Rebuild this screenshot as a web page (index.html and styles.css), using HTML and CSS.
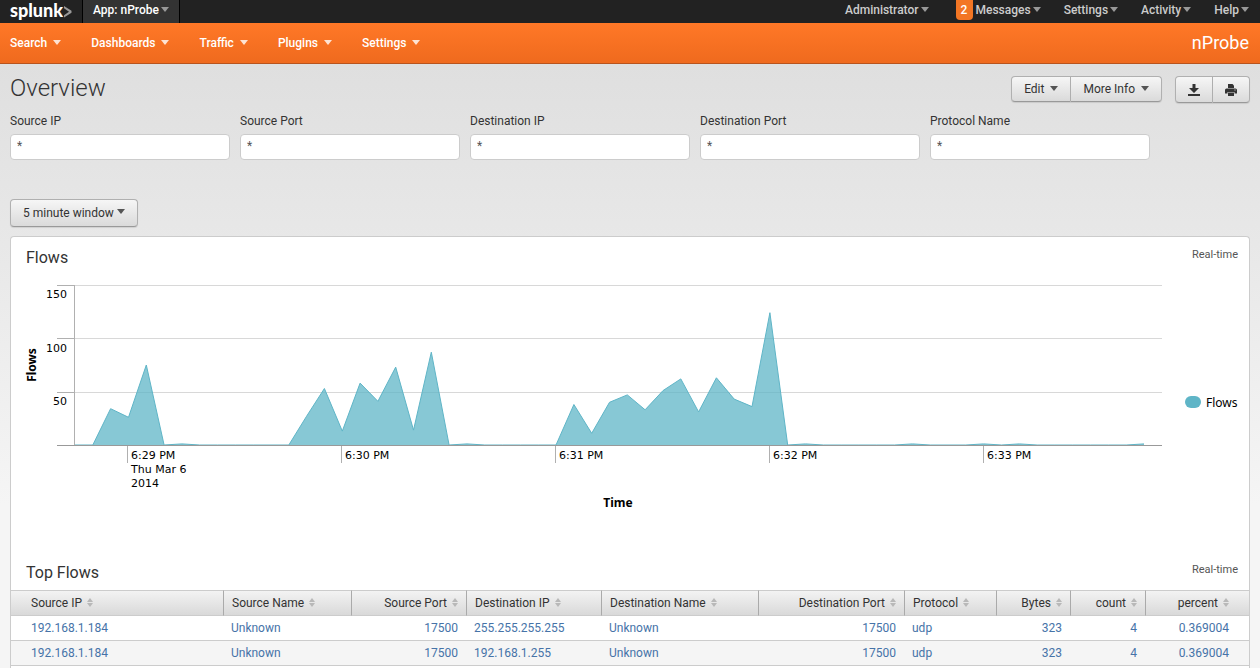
FILE: index.html
```
<!DOCTYPE html>
<html lang="en">
<head>
    <meta charset="utf-8">
    <title>Overview - nProbe</title>
    <link rel="stylesheet" href="styles.css">
</head>
<body>
    <div class="topbar">
        <a class="logo" href="#">splunk<svg width="9" height="14" viewBox="0 0 9 14"><path d="M1 1 L1 3.2 L6 6.8 L1 10.2 L1 12.6 L8.5 7.8 V5.8z" fill="#999"/></svg></a>
        <a class="app" href="#">App: nProbe<span class="caret"></span></a>
        <div class="account">
            <a href="#">Administrator<span class="caret"></span></a>
            <a href="#"><span class="badge">2</span>Messages<span class="caret"></span></a>
            <a href="#">Settings<span class="caret"></span></a>
            <a href="#">Activity<span class="caret"></span></a>
            <a href="#">Help<span class="caret"></span></a>
        </div>
    </div>
    <nav class="appbar">
        <a href="#">Search<span class="caret"></span></a>
        <a href="#">Dashboards<span class="caret"></span></a>
        <a href="#">Traffic<span class="caret"></span></a>
        <a href="#">Plugins<span class="caret"></span></a>
        <a href="#">Settings<span class="caret"></span></a>
        <a class="appname" href="#">nProbe</a>
    </nav>

    <main>
        <div class="header">
            <h1>Overview</h1>
            <div class="group">
                <button class="btn">Edit<span class="caret"></span></button>
                <button class="btn">More Info<span class="caret"></span></button>
            </div>
            <div class="group icons">
                <button class="btn" aria-label="Export">
                    <svg width="12" height="12" viewBox="0 0 12 12" fill="#333"><path d="M4.5 0h3v4H11L6 9 1 4h3.5zM0 10h12v2H0z"/></svg>
                </button>
                <button class="btn" aria-label="Print">
                    <svg width="12" height="12" viewBox="0 0 12 12" fill="#333"><path d="M3 0h4.5L9 1.5V4H3z"/><path fill-rule="evenodd" d="M1.5 4.5h9Q12 4.5 12 6v3.5H9.5V8h-7v1.5H0V6q0-1.5 1.5-1.5zM9.5 5.5v1h1v-1z"/><path d="M3 8.5h6V12H3z"/></svg>
                </button>
            </div>
        </div>

        <form class="filters">
            <div class="field">
                <label for="srcip">Source IP</label>
                <input type="text" id="srcip" value="*">
            </div>
            <div class="field">
                <label for="srcport">Source Port</label>
                <input type="text" id="srcport" value="*">
            </div>
            <div class="field">
                <label for="dstip">Destination IP</label>
                <input type="text" id="dstip" value="*">
            </div>
            <div class="field">
                <label for="dstport">Destination Port</label>
                <input type="text" id="dstport" value="*">
            </div>
            <div class="field">
                <label for="proto">Protocol Name</label>
                <input type="text" id="proto" value="*">
            </div>
        </form>

        <button class="btn window">5 minute window<span class="caret"></span></button>

        <div class="panel">
            <div class="panel_head">
                <h2>Flows</h2>
                <span>Real-time</span>
            </div>
            <svg class="chart" viewBox="0 0 1238 277">
                <g class="grid">
                    <path d="M64 10.5H1151M64 63.5H1151M64 117.5H1151"/>
                </g>
                <polygon id="area"/>
                <polyline id="line"/>
                <g class="axis">
                    <path d="M46 10.5H64M46 63.5H64M46 117.5H64M63.5 10V170"/>
                    <path d="M116.5 171V188M330.5 171V188M544.5 171V188M758.5 171V188M972.5 171V188"/>
                    <path class="base" d="M46 170.5H1151"/>
                </g>
                <g class="ticks ylabels">
                    <text x="56" y="23">150</text>
                    <text x="56" y="77">100</text>
                    <text x="56" y="130">50</text>
                </g>
                <g class="ticks">
                    <text x="120" y="184">6:29 PM</text>
                    <text x="120" y="198">Thu Mar 6</text>
                    <text x="120" y="212">2014</text>
                    <text x="334" y="184">6:30 PM</text>
                    <text x="548" y="184">6:31 PM</text>
                    <text x="762" y="184">6:32 PM</text>
                    <text x="976" y="184">6:33 PM</text>
                </g>
                <text class="title" x="607" y="232">Time</text>
                <text class="title" transform="translate(25 90) rotate(-90)">Flows</text>
                <rect class="key" x="1174" y="121" width="16" height="12" rx="6"/>
                <text x="1195" y="132">Flows</text>
            </svg>

            <div class="panel_head">
                <h2>Top Flows</h2>
                <span>Real-time</span>
            </div>
            <table>
                <colgroup>
                    <col class="c1"><col class="c2"><col class="c3"><col class="c4"><col class="c5">
                    <col class="c6"><col class="c7"><col class="c8"><col class="c9"><col class="c10">
                </colgroup>
                <thead>
                    <tr>
                        <th>Source IP<span class="sort"></span></th>
                        <th>Source Name<span class="sort"></span></th>
                        <th class="num">Source Port<span class="sort"></span></th>
                        <th>Destination IP<span class="sort"></span></th>
                        <th>Destination Name<span class="sort"></span></th>
                        <th class="num">Destination Port<span class="sort"></span></th>
                        <th>Protocol<span class="sort"></span></th>
                        <th class="num">Bytes<span class="sort"></span></th>
                        <th class="num">count<span class="sort"></span></th>
                        <th class="num">percent<span class="sort"></span></th>
                    </tr>
                </thead>
                <tbody>
                    <tr>
                        <td>192.168.1.184</td>
                        <td>Unknown</td>
                        <td class="num">17500</td>
                        <td>255.255.255.255</td>
                        <td>Unknown</td>
                        <td class="num">17500</td>
                        <td>udp</td>
                        <td class="num">323</td>
                        <td class="num">4</td>
                        <td class="num">0.369004</td>
                    </tr>
                    <tr>
                        <td>192.168.1.184</td>
                        <td>Unknown</td>
                        <td class="num">17500</td>
                        <td>192.168.1.255</td>
                        <td>Unknown</td>
                        <td class="num">17500</td>
                        <td>udp</td>
                        <td class="num">323</td>
                        <td class="num">4</td>
                        <td class="num">0.369004</td>
                    </tr>
                </tbody>
            </table>
        </div>
    </main>

    <script>
// one value every 5 seconds
const flows = [
    0, 0, 34, 26, 75, 0, 1, 0, 0, 0, 0, 0,
    0, 27, 53, 13, 58, 41, 73, 14, 87, 0, 1, 0,
    0, 0, 0, 0, 38, 11, 40, 47, 33, 51, 62, 31,
    63, 43, 36, 124, 0, 1, 0, 0, 0, 0, 0, 1,
    0, 0, 0, 1, 0, 1, 0, 0, 0, 0, 0, 0, 1
];
const left = 64, base = 170, width = 1069, scale = 160 / 150;

const points = flows.map((v, i) => {
    const x = left + i * width / (flows.length - 1);
    return x.toFixed(1) + "," + (base - v * scale).toFixed(1);
}).join(" ");

document.getElementById("line").setAttribute("points", points);
document.getElementById("area").setAttribute("points", `${left},${base} ${points} ${left + width},${base}`);
    </script>
</body>
</html>
```
FILE: styles.css
```
*{
    box-sizing: border-box;
}
body{
    margin: 0;
    min-height: 100vh;
    display: flex;
    flex-direction: column;
    font-family: Roboto, sans-serif;
    font-size: 12px;
    line-height: 16px;
    color: #333;
    background: #f5f5f5 linear-gradient(#dfdfdf, #f5f5f5) no-repeat 0 64px / 100% 440px;
}
a{
    text-decoration: none;
}
h1, h2{
    margin: 0;
}
.caret{
    display: inline-block;
    border-left: 4px solid transparent;
    border-right: 4px solid transparent;
    border-top: 5px solid currentColor;
    vertical-align: middle;
}

/* top bars */
.topbar{
    display: flex;
    height: 23px;
    background: #222;
    font-weight: 500;
    line-height: 20px;
}
.logo{
    width: 83px;
    padding-left: 10px;
    color: #fff;
    font-family: Lato, sans-serif;
    font-size: 18px;
    font-weight: 900;
    white-space: nowrap;
    border-right: 1px solid #000;
}
.logo svg{
    vertical-align: -2px;
}
.app{
    padding: 0 10px;
    color: #fff;
    background: #333;
    border-right: 1px solid #000;
}
.account{
    display: flex;
    gap: 23px;
    margin-left: auto;
    padding-right: 11px;
}
.account a{
    color: #ccc;
}
.topbar .caret{
    color: #999;
    margin-left: 2px;
    margin-bottom: 2px;
}
.badge{
    display: inline-block;
    width: 17px;
    margin-right: 3px;
    margin-left: 4px;
    text-align: center;
    color: #fff;
    background: #f37624;
    border-radius: 0 0 4px 4px;
}
.appbar{
    display: flex;
    align-items: center;
    gap: 30px;
    height: 41px;
    padding: 0 11px 0 10px;
    font-weight: 500;
    background: linear-gradient(#ff7827, #ef6a1e);
    border-bottom: 1px solid #b8541d;
}
.appbar a{
    color: #fff;
}
.appbar .caret{
    margin-left: 6px;
    margin-bottom: 2px;
    opacity: 0.8;
}
.appbar .appname{
    margin-left: auto;
    font-size: 18px;
    font-weight: 400;
}

main{
    flex: 1;
    display: flex;
    flex-direction: column;
    padding: 12px 10px 0;
}
.header{
    display: flex;
    align-items: flex-start;
    margin-bottom: 10px;
}
h1{
    flex: 1;
    font-size: 24px;
    line-height: 24px;
    font-weight: 300;
}

/* buttons */
.btn{
    height: 26px;
    padding: 0 12px;
    font: inherit;
    color: #333;
    background: linear-gradient(#f6f6f6, #dadada);
    border: 1px solid #b0b0b0;
    border-bottom-color: #999;
    border-radius: 4px;
    box-shadow: 0 1px 1px rgba(0, 0, 0, 0.1);
    white-space: nowrap;
}
.btn .caret{
    margin-left: 6px;
    margin-bottom: 2px;
    color: #555;
}
.group{
    display: flex;
}
.group .btn:first-child{
    border-radius: 4px 0 0 4px;
}
.group .btn:last-child{
    border-radius: 0 4px 4px 0;
    border-left: 0;
}
.icons{
    margin-left: 13px;
}
.icons .btn{
    display: flex;
    align-items: center;
    height: 27px;
}
.window{
    align-self: flex-start;
    height: 28px;
    margin-bottom: 9px;
}
.window .caret{
    margin-left: 3px;
    margin-bottom: 4px;
}

.filters{
    display: flex;
    flex-wrap: wrap;
    gap: 10px;
    margin-bottom: 39px;
}
.field{
    width: 220px;
}
.field label{
    display: block;
    margin-bottom: 5px;
}
.field input{
    display: block;
    width: 100%;
    height: 26px;
    padding: 0 6px 2px;
    font: inherit;
    color: #555;
    background: #fff;
    border: 1px solid #ccc;
    border-radius: 4px;
}

/* panel */
.panel{
    flex: 1;
    background: #fff;
    border: 1px solid #ccc;
    border-bottom: 0;
    border-radius: 4px 4px 0 0;
}
.panel_head{
    display: flex;
    justify-content: space-between;
    height: 38px;
    padding: 9px 11px 0 15px;
    font-size: 11px;
    line-height: 18px;
    color: #555;
}
h2{
    font-size: 16px;
    line-height: 24px;
    font-weight: 400;
    color: #333;
}

/* chart */
.chart{
    display: block;
    width: 100%;
    font-family: "Noto Sans", sans-serif;
    font-size: 12px;
    fill: #000;
}
.chart path{
    fill: none;
    stroke: #d8d8d8;
    shape-rendering: crispEdges;
}
.chart .axis path{
    stroke: #b0b0b0;
}
.chart .axis .base{
    stroke: #999;
}
.ticks{
    font-family: "DejaVu Sans", sans-serif;
    font-size: 11px;
}
.ylabels{
    text-anchor: end;
}
.title{
    font-weight: 700;
    text-anchor: middle;
}
.key{
    fill: #5fb5c7;
}
#area{
    fill: #5fb5c7;
    fill-opacity: 0.75;
}
#line{
    fill: none;
    stroke: #5fb5c7;
}

/* table */
table{
    width: 100%;
    table-layout: fixed;
    border-collapse: separate;
    border-spacing: 0;
}
.c1{ width: 213px; }
.c2{ width: 128px; }
.c3{ width: 115px; }
.c4{ width: 135px; }
.c5{ width: 157px; }
.c6{ width: 146px; }
.c7{ width: 92px; }
.c8{ width: 74px; }
.c9{ width: 75px; }
.c10{ width: 103px; }
th, td{
    padding: 4px 8px;
    text-align: left;
    white-space: nowrap;
    border-bottom: 1px solid #ccc;
}
th{
    font-weight: 400;
    background: linear-gradient(#f3f3f3, #d9d9d9);
    border-top: 1px solid #ccc;
    border-right: 1px solid #aaa;
}
td{
    padding: 4px 9px 4px 7px;
    color: #4673a8;
}
th:first-child, td:first-child{
    padding-left: 20px;
}
th:last-child, td:last-child{
    padding-right: 20px;
    border-right: 0;
}
tbody tr:nth-child(even){
    background: #f5f5f5;
}
.num{
    text-align: right;
}
.sort{
    display: inline-block;
    margin-left: 5px;
}
.sort::before, .sort::after{
    content: "";
    display: block;
    border-left: 3px solid transparent;
    border-right: 3px solid transparent;
}
.sort::before{
    border-bottom: 4px solid #b8b8b8;
    margin-bottom: 1px;
}
.sort::after{
    border-top: 4px solid #b8b8b8;
}
```
